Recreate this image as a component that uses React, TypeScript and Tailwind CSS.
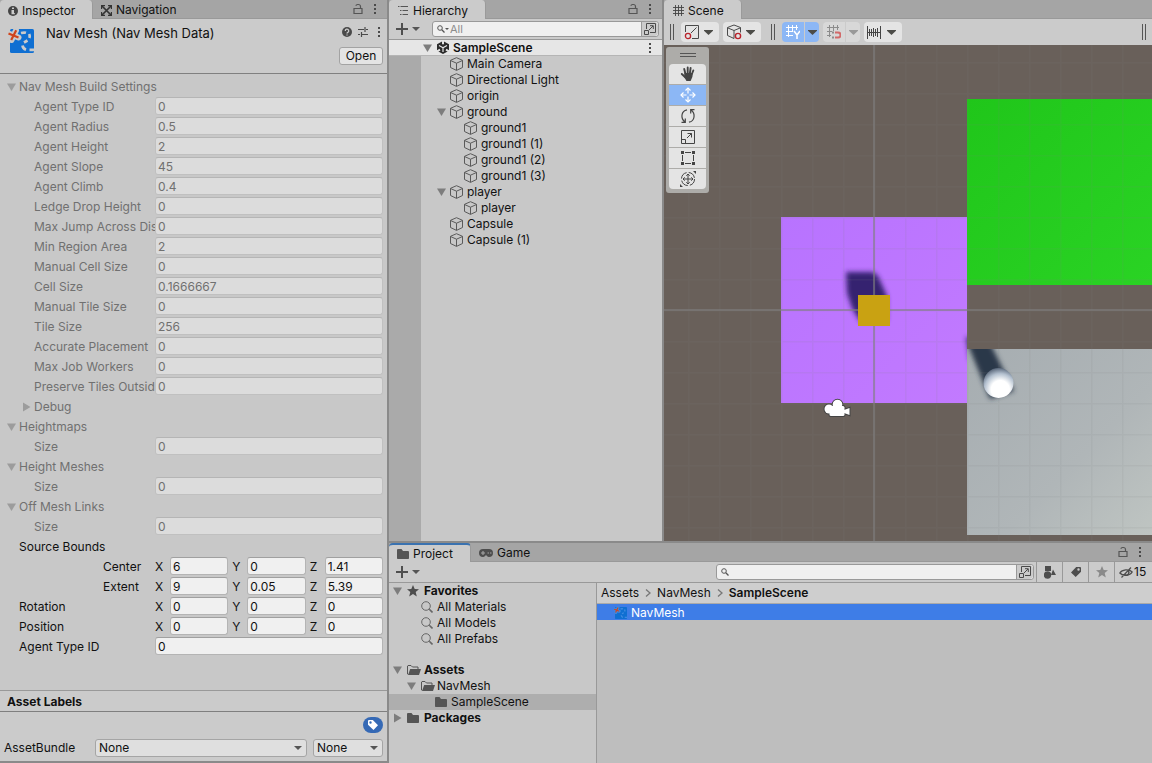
import React, { useState } from 'react';

interface Field {
  label: string;
  value: string;
}

interface TreeItem {
  name: string;
  depth: number;
  open?: boolean;
}

interface VectorField {
  label: string;
  values: [string, string, string];
  indent?: boolean;
}

const buildSettings: Field[] = [
  { label: 'Agent Type ID', value: '0' },
  { label: 'Agent Radius', value: '0.5' },
  { label: 'Agent Height', value: '2' },
  { label: 'Agent Slope', value: '45' },
  { label: 'Agent Climb', value: '0.4' },
  { label: 'Ledge Drop Height', value: '0' },
  { label: 'Max Jump Across Dis', value: '0' },
  { label: 'Min Region Area', value: '2' },
  { label: 'Manual Cell Size', value: '0' },
  { label: 'Cell Size', value: '0.1666667' },
  { label: 'Manual Tile Size', value: '0' },
  { label: 'Tile Size', value: '256' },
  { label: 'Accurate Placement', value: '0' },
  { label: 'Max Job Workers', value: '0' },
  { label: 'Preserve Tiles Outsid', value: '0' },
];

const vectors: VectorField[] = [
  { label: 'Center', values: ['6', '0', '1.41'], indent: true },
  { label: 'Extent', values: ['9', '0.05', '5.39'], indent: true },
  { label: 'Rotation', values: ['0', '0', '0'] },
  { label: 'Position', values: ['0', '0', '0'] },
];

const sceneTree: TreeItem[] = [
  { name: 'Main Camera', depth: 0 },
  { name: 'Directional Light', depth: 0 },
  { name: 'origin', depth: 0 },
  { name: 'ground', depth: 0, open: true },
  { name: 'ground1', depth: 1 },
  { name: 'ground1 (1)', depth: 1 },
  { name: 'ground1 (2)', depth: 1 },
  { name: 'ground1 (3)', depth: 1 },
  { name: 'player', depth: 0, open: true },
  { name: 'player', depth: 1 },
  { name: 'Capsule', depth: 0 },
  { name: 'Capsule (1)', depth: 0 },
];

/* ---------- Icons ---------- */

const Foldout = ({ open = true, className = 'text-[#7d7d7d]' }: { open?: boolean; className?: string }) => (
  <svg className={`h-[10px] w-[10px] shrink-0 ${className}`} viewBox="0 0 10 10" fill="currentColor">
    {open ? <path d="M0 1.500h9L4.500 9z" /> : <path d="M1 .5v9L8.500 5z" />}
  </svg>
);

const CaretIcon = ({ className = 'text-[#4c4c48]' }: { className?: string }) => (
  <svg className={`h-[5px] w-[9px] shrink-0 ${className}`} viewBox="0 0 9 5" fill="currentColor">
    <path d="M0 0h9v.8L4.500 5 0 .8z" />
  </svg>
);

const SmallCaretIcon = () => (
  <svg className="h-[4px] w-[8px] shrink-0" viewBox="0 0 8 4" fill="#555">
    <path d="M0 0h8L4 4z" />
  </svg>
);

const LockIcon = () => (
  <svg className="h-[12px] w-[10px]" viewBox="0 0 10 12" fill="none" stroke="#555">
    <path d="M1 5.500h8v5H1zM7.500 5.500V3.500a2 2 0 0 0-2-2h-1a2 2 0 0 0-1.700 1.200" strokeWidth="1.200" />
  </svg>
);

const DotsIcon = () => (
  <svg className="h-[10px] w-[2px]" viewBox="0 0 2 10" fill="#4a4a4a">
    <path d="M0 0h2v2H0zM0 4h2v2H0zM0 8h2v2H0z" />
  </svg>
);

const InfoIcon = () => (
  <svg className="h-[10px] w-[10px]" viewBox="0 0 10 10">
    <circle cx="5" cy="5" r="5" fill="#444" />
    <path d="M4 1.500h2v1.500H4zM3.500 4H6v3.500H3.500M3.500 7h3.300v1.200H3.500z" fill="#cbcbcb" />
  </svg>
);

const NavigationIcon = () => (
  <svg className="h-[11px] w-[11px]" viewBox="0 0 11 11" fill="none" stroke="#333">
    <path d="M1 1l9 9M10 1l-9 9" strokeWidth="1.700" />
    <path d="M.5 4V.5H4M7 .5h3.500V4M.5 7v3.500H4M7 10.500h3.500V7" strokeWidth="1.300" />
  </svg>
);

const HelpIcon = () => (
  <svg className="h-[10px] w-[10px]" viewBox="0 0 10 10">
    <circle cx="5" cy="5" r="5" fill="#4a4a4a" />
    <path d="M3.300 4a1.700 1.700 0 1 1 2.500 1.400c-.6.300-.8.500-.8 1.100M5 7.400v1.200" fill="none" stroke="#cbcbcb" strokeWidth="1.300" />
  </svg>
);

const PresetIcon = () => (
  <svg className="h-[10px] w-[10px]" viewBox="0 0 10 10" stroke="#4a4a4a" fill="none">
    <path d="M0 2.500h6M8 2.500h2M7 0v5M0 7.500h2M4 7.500h6M3.500 5v5" strokeWidth="1.200" />
  </svg>
);

const NavMeshIcon = ({ className, trail = '#cbcbcb' }: { className: string; trail?: string }) => (
  <svg className={className} viewBox="0 0 26 26" fill="none">
    <rect x="2" y="2" width="24" height="24" rx="1.500" fill="#0f6fd2" />
    <path d="M.5 6.500l10 4M8 3.500L3.500 13" stroke={trail} strokeWidth="6" strokeLinecap="round" />
    <path d="M13 6q3-.8 5-.2M21.200 7q1 2 .2 4M19.500 13.500l-3.500 2M14.500 18.500q.3 3 3.500 4.200M21.500 22.800H26" stroke={trail} strokeWidth="2.700" />
    <path d="M.5 6.500l10 4M8.200 3.200L3.200 13" stroke="#cf441c" strokeWidth="2.200" />
  </svg>
);

const HierarchyIcon = () => (
  <svg className="h-[9px] w-[12px]" viewBox="0 0 12 9" stroke="#555" fill="none">
    <path d="M1 .5h1.500M3.500 .5H11M3 4.500h1.500M5.500 4.500H11M3 8.500h1.500M5.500 8.500H11" />
  </svg>
);

const PlusIcon = () => (
  <svg className="h-[12px] w-[12px]" viewBox="0 0 12 12" fill="#4f4f4f">
    <path d="M5 0h2v5h5v2H7v5H5V7H0V5h5z" />
  </svg>
);

const SearchIcon = () => (
  <svg className="h-[8px] w-[8px] shrink-0" viewBox="0 0 8 8" fill="none" stroke="#555">
    <circle cx="3" cy="3" r="2.300" />
    <path d="M4.800 4.800L7.500 7.500" strokeWidth="1.300" />
  </svg>
);

const SavedSearchIcon = () => (
  <svg className="h-[12px] w-[12px] shrink-0" viewBox="0 0 12 12" fill="none" stroke="#666">
    <circle cx="5" cy="5" r="4.300" />
    <path d="M8.300 8.300L11.500 11.500" strokeWidth="1.600" />
  </svg>
);

const PopOutIcon = () => (
  <svg className="h-[12px] w-[12px]" viewBox="0 0 12 12" fill="none" stroke="#4a4a4a">
    <path d="M2.500 6V.5h9v9H6M.5 7.500h4v4h-4zM5 7l4-4M6 2.700h3.300V6" />
  </svg>
);

const UnityIcon = () => (
  <svg className="h-[13px] w-[12px]" viewBox="0 0 12 13">
    <path d="M6 0l6 3.300v6.400L6 13 0 9.700V3.300z" fill="#2b2b2b" />
    <path d="M6 6.700V11M6 6.700L2 4.400M6 6.700l4-2.300" stroke="#e6e6e6" strokeWidth="1.200" />
    <path d="M6 0v3.200M0 10.300l3-1.700M12 10.300L9 8.600" stroke="#e6e6e6" strokeWidth="2" />
  </svg>
);

const CubeIcon = () => (
  <svg className="h-[14px] w-[14px] shrink-0" viewBox="0 0 14 14" fill="none" stroke="#5a5a5a" strokeLinejoin="round">
    <path d="M6.500 .7l6 2.600v7.200L6.500 13.400l-6-2.900V3.300zM.5 3.500l6 2.700 6-2.700M6.500 6.200v7" />
  </svg>
);

const SceneIcon = () => (
  <svg className="h-[11px] w-[12px]" viewBox="0 0 12 11" stroke="#444">
    <path d="M3.500 0v11M6.500 0v11M9.500 0v11M1 2.500h11M1 5.500h11M1 8.500h11" strokeWidth=".9" />
  </svg>
);

const FolderIcon = () => (
  <svg className="h-[10px] w-[12px] shrink-0" viewBox="0 0 12 10" fill="#555">
    <path d="M0 1a1 1 0 0 1 1-1h3.500L6 2h5a1 1 0 0 1 1 1v6.200a.8.8 0 0 1-.8.800H.8A.8.8 0 0 1 0 9.200z" />
  </svg>
);

const FolderOpenIcon = () => (
  <svg className="h-[10px] w-[14px] shrink-0" viewBox="0 0 14 10" fill="none">
    <path d="M1 9.500L.5 9V1L1 .5h3l1.500 1.500H11v2" stroke="#555" />
    <path d="M3.200 4H14l-2 6H1z" fill="#555" />
  </svg>
);

const StarIcon = ({ fill = '#4d4d4d' }: { fill?: string }) => (
  <svg className="h-[12px] w-[12px]" viewBox="0 0 12 12" fill={fill}>
    <path d="M6 0l1.700 4 4.300.3-3.300 2.800 1.100 4.400L6 9.100l-3.800 2.400 1.100-4.400L0 4.300 4.300 4z" />
  </svg>
);

const GamepadIcon = () => (
  <svg className="h-[8px] w-[14px]" viewBox="0 0 14 8">
    <path d="M4 0h6a4 4 0 0 1 0 8q-1.500 0-2.200-1.500H6.200Q5.500 8 4 8a4 4 0 0 1 0-8z" fill="#4d4d4d" />
    <path d="M2 4h4M4 2v4M8.500 4h1.500M11 4h1.500" stroke="#a5a5a5" strokeWidth="1.100" />
  </svg>
);

const TagIcon = ({ fill }: { fill: string }) => (
  <svg className="h-[10px] w-[10px]" viewBox="0 0 10 10" fill={fill}>
    <path fillRule="evenodd" d="M0 1a1 1 0 0 1 1-1h3.800L10 5.300 5.500 10 0 4.800zm2.500.3a1.200 1.200 0 1 0 0 2.400 1.200 1.200 0 0 0 0-2.400z" />
  </svg>
);

const TypeFilterIcon = () => (
  <svg className="h-[13px] w-[12px]" viewBox="0 0 12 13" fill="#4d4d4d">
    <path d="M1 0h6v5H1zM9 3.500l3 5.500H7z" />
    <circle cx="3.500" cy="9" r="3.700" />
  </svg>
);

const HiddenIcon = () => (
  <svg className="h-[11px] w-[14px]" viewBox="0 0 14 11" fill="none" stroke="#4d4d4d">
    <path d="M.8 6C3 2.500 10 1.500 13.200 5 11 9 4 9.500.8 6zM12 .5L2.500 10.500" strokeWidth="1.200" />
    <path d="M9 3.500a2.500 2.500 0 0 1-3.500 4" strokeWidth="1.500" />
  </svg>
);

const ShadingIcon = () => (
  <svg className="h-[16px] w-[16px]" viewBox="0 0 16 16" fill="none">
    <path d="M1.500 8V1.500h13v13H8M12.500 3.500L7 9" stroke="#4a4a4a" />
    <circle cx="4" cy="12" r="2.600" stroke="#b8232c" strokeWidth="1.300" />
  </svg>
);

const GizmoCubeIcon = () => (
  <svg className="h-[16px] w-[16px]" viewBox="0 0 16 16" fill="none">
    <path d="M8 1l6.500 2.500v5M8 1L1.500 3.500v8L8 14.500V6.500M1.500 3.800L8 6.500l6.500-2.700" stroke="#4a4a4a" />
    <circle cx="12" cy="12" r="2.600" stroke="#b8232c" strokeWidth="1.400" />
  </svg>
);

const GridAxisIcon = () => (
  <svg className="h-[14px] w-[14px]" viewBox="0 0 14 14" fill="none" stroke="#fff">
    <path d="M2.500 0v12M6.500 0v6M10.500 0v5M0 2.500h12M0 6.500h7M0 10.500h7" />
    <path d="M8 6l3 4 3-4M11 10v4" strokeWidth="1.500" />
  </svg>
);

const GridSnapIcon = () => (
  <svg className="h-[14px] w-[14px]" viewBox="0 0 14 14" fill="none" stroke="#8c8c8c">
    <path d="M2.500 0v12M6.500 0v6M10.500 0v5M0 2.500h12M0 6.500h5M0 10.500h4" />
    <path d="M8 7.500h3a2.500 2.500 0 0 1 0 5H8" stroke="#d26a6a" strokeWidth="2" />
    <path d="M5 7.500h2M5 12.500h2" strokeWidth="2" />
  </svg>
);

const RulerIcon = () => (
  <svg className="h-[13px] w-[14px]" viewBox="0 0 14 13" fill="none" stroke="#444">
    <path d="M.5 0v13M13.500 0v13M2.500 3v7M4.500 3v7M6.500 2v9M8.500 3v7M10.500 2v9M0 6.500h14" />
  </svg>
);

const HandIcon = () => (
  <svg className="h-[16px] w-[16px]" viewBox="0 0 16 16" fill="none" stroke="#444" strokeWidth="1.900" strokeLinecap="round">
    <path d="M5.500 8L4.200 3M7.700 8V1.500M9.800 8l.8-6M11.500 9l1.800-4.500M5.500 11.500L1.800 8" />
    <path d="M5.300 8h6.200v2.500L10 14H7l-1.700-3z" fill="#444" />
  </svg>
);

const MoveIcon = () => (
  <svg className="h-[16px] w-[16px]" viewBox="0 0 16 16" fill="none" stroke="#fff" strokeWidth="1.200">
    <path d="M8 1v5.500M8 9.500V15M1 8h5.500M9.500 8H15" />
    <path d="M5.500 3.500L8 1l2.500 2.500M5.500 12.500L8 15l2.500-2.500M3.500 5.500L1 8l2.500 2.500M12.500 5.500L15 8l-2.500 2.500" />
  </svg>
);

const RotateIcon = () => (
  <svg className="h-[16px] w-[16px]" viewBox="0 0 16 16" fill="none" stroke="#444" strokeWidth="1.200">
    <path d="M7 1.800C1 3 .3 10.500 5 14M1.500 14.400H5.300V10.500M9 14.200c6-1.200 6.700-8.700 2-12.200M14.500 1.600H10.700v4" />
  </svg>
);

const ScaleIcon = () => (
  <svg className="h-[16px] w-[16px]" viewBox="0 0 16 16" fill="none" stroke="#444">
    <path d="M1.500 1.500h13v13h-13zM1.500 10.500h4v4M7 9l4.500-4.500M7.500 4.500h4v4" />
  </svg>
);

const RectIcon = () => (
  <svg className="h-[16px] w-[16px]" viewBox="0 0 16 16" fill="none" stroke="#444">
    <path d="M5 2.500h6M5 13.500h6M2.500 5v6M13.500 5v6" />
    <path d="M1 1h3v3H1zM12 1h3v3h-3zM1 12h3v3H1zM12 12h3v3h-3z" fill="#444" stroke="none" />
  </svg>
);

const TransformIcon = () => (
  <svg className="h-[16px] w-[16px]" viewBox="0 0 16 16" fill="none" stroke="#444">
    <circle cx="8" cy="8" r="6.500" strokeDasharray="8 2.200" />
    <path d="M8 3v10M3 8h10M6.300 4.700L8 3l1.700 1.700M6.300 11.300L8 13l1.700-1.700M4.700 6.300L3 8l1.700 1.700M11.300 6.300L13 8l-1.700 1.700" />
    <path d="M16 0v3l-3-3zM0 16v-3l3 3z" fill="#444" stroke="none" />
  </svg>
);

/* ---------- Shared pieces ---------- */

interface TabProps {
  icon: React.ReactNode;
  label: string;
  active?: boolean;
  focused?: boolean;
  className?: string;
}

const Tab: React.FC<TabProps> = ({ icon, label, active, focused, className = '' }) => (
  <button
    className={`flex h-full items-center gap-1 pr-2 pl-2 ${
      active ? 'rounded-t-sm border-r border-[#9a9a9a] bg-[#cbcbcb]' : 'border-b border-[#999]'
    } ${focused ? 'border-t-2 border-t-[#3a72b0]' : 'pt-[2px]'} ${className}`}
  >
    {icon}
    <span>{label}</span>
  </button>
);

const TabBar: React.FC<{ children: React.ReactNode; menu?: boolean }> = ({ children, menu = true }) => (
  <div className="flex h-[19px] shrink-0 bg-[#a5a5a5]">
    {children}
    <div className="flex flex-1 items-center justify-end gap-[11px] border-b border-[#999] pr-[11px]">
      {menu && (
        <>
          <button aria-label="Lock"><LockIcon /></button>
          <button aria-label="Menu"><DotsIcon /></button>
        </>
      )}
    </div>
  </div>
);

const DisabledRow: React.FC<Field & { id: string }> = ({ id, label, value }) => (
  <div className="flex h-5 items-center pr-1">
    <label htmlFor={id} className="w-[155px] shrink-0 pl-[34px] whitespace-nowrap">
      {label}
    </label>
    <input
      id={id}
      disabled
      defaultValue={value}
      className="h-[18px] min-w-0 flex-1 self-start rounded-[3px] border border-[#c0c0c0] border-t-[#b5b5b5] bg-[#dcdcdc] px-[2px]"
    />
  </div>
);

const GroupRow: React.FC<{ label: string }> = ({ label }) => (
  <button className="flex h-5 w-full items-center gap-[2px] pl-[7px]">
    <Foldout className="text-[#9c9c9c]" />
    {label}
  </button>
);

const enabledInput =
  'h-[18px] min-w-0 flex-1 self-start rounded-[3px] border border-[#b4b4b4] border-t-[#a0a0a0] bg-[#f0f0f0] px-[2px] text-[#111]';

const selectStyle =
  'block h-[18px] w-full appearance-none rounded-[3px] border border-[#a5a5a5] bg-[#dfdfdf] px-[3px] leading-4';

/* ---------- Inspector ---------- */

const Inspector = () => (
  <aside className="flex w-[389px] shrink-0 flex-col border-r-2 border-b-2 border-[#8a8a8a] bg-[#c8c8c8]">
    <TabBar>
      <Tab icon={<InfoIcon />} label="Inspector" active className="w-[93px]" />
      <Tab icon={<NavigationIcon />} label="Navigation" />
    </TabBar>

    <header className="flex h-[55px] shrink-0 items-start border-b border-[#808080] bg-[#cbcbcb] pr-1 pl-2">
      <NavMeshIcon className="mt-2 h-[26px] w-[26px]" />
      <h1 className="mt-1 ml-3 text-[13px] leading-5">Nav Mesh (Nav Mesh Data)</h1>
      <div className="ml-auto flex flex-col items-end gap-[10px] pt-2">
        <div className="flex items-center gap-[6px] pr-[3px]">
          <button aria-label="Help"><HelpIcon /></button>
          <button aria-label="Presets"><PresetIcon /></button>
          <button aria-label="Menu" className="pl-1"><DotsIcon /></button>
        </div>
        <button className="h-[18px] w-[44px] rounded-[3px] border border-[#a3a3a3] bg-[#e4e4e4]">
          Open
        </button>
      </div>
    </header>

    <div className="flex-1 pt-[3px]">
      <div className="text-[#707070]">
        <GroupRow label="Nav Mesh Build Settings" />
        {buildSettings.map((field, index) => (
          <DisabledRow key={field.label} id={`build-${index}`} {...field} />
        ))}
        <button className="flex h-5 items-center gap-[2px] pl-[22px]">
          <Foldout open={false} className="text-[#9c9c9c]" />
          Debug
        </button>
        {['Heightmaps', 'Height Meshes', 'Off Mesh Links'].map((group) => (
          <div key={group}>
            <GroupRow label={group} />
            <DisabledRow id={`${group}-size`} label="Size" value="0" />
          </div>
        ))}
      </div>

      <div className="flex h-5 items-center pl-[19px]">Source Bounds</div>
      {vectors.map(({ label, values, indent }) => (
        <div key={label} className="flex h-5 items-center pr-1" role="group" aria-label={label}>
          <span className={`w-[155px] shrink-0 ${indent ? 'pl-[103px]' : 'pl-[19px]'}`}>{label}</span>
          <div className="grid flex-1 grid-cols-3 gap-x-1">
            {['X', 'Y', 'Z'].map((axis, index) => (
              <label key={axis} className="flex h-5 items-center">
                <span className="w-[15px]">{axis}</span>
                <input defaultValue={values[index]} className={enabledInput} />
              </label>
            ))}
          </div>
        </div>
      ))}
      <div className="flex h-5 items-center pr-1">
        <label htmlFor="agent-type" className="w-[155px] shrink-0 pl-[19px]">Agent Type ID</label>
        <input id="agent-type" defaultValue="0" className={enabledInput} />
      </div>
    </div>

    <footer className="shrink-0 bg-[#cbcbcb]">
      <h2 className="flex h-[22px] items-center border-y border-t-[#999] border-b-[#7f7f7f] pt-px pl-[7px] font-bold">
        Asset Labels
      </h2>
      <div className="flex justify-end pt-[5px] pr-1">
        <button aria-label="Labels" className="flex h-4 w-5 items-center justify-center rounded-full bg-[#3569b5]">
          <TagIcon fill="#fff" />
        </button>
      </div>
      <div className="mt-[6px] flex items-center gap-[6px] pr-1 pb-1 pl-1">
        <label htmlFor="bundle" className="w-[85px]">AssetBundle</label>
        <div className="relative flex-1">
          <select id="bundle" className={selectStyle}>
            <option>None</option>
          </select>
          <span className="pointer-events-none absolute top-[7px] right-[5px]"><SmallCaretIcon /></span>
        </div>
        <div className="relative w-[70px]">
          <select aria-label="Variant" className={selectStyle}>
            <option>None</option>
          </select>
          <span className="pointer-events-none absolute top-[7px] right-[5px]"><SmallCaretIcon /></span>
        </div>
      </div>
    </footer>
  </aside>
);

/* ---------- Hierarchy ---------- */

const Hierarchy = () => (
  <section className="flex w-[275px] shrink-0 flex-col border-r-2 border-[#8a8a8a] bg-[#c8c8c8]">
    <TabBar>
      <Tab icon={<HierarchyIcon />} label="Hierarchy" active className="w-[97px]" />
    </TabBar>
    <div className="flex h-[21px] shrink-0 items-center border-b border-[#999] bg-[#cbcbcb] pr-[3px] pl-[7px]">
      <button aria-label="Create" className="flex items-center gap-1">
        <PlusIcon />
        <SmallCaretIcon />
      </button>
      <div className="ml-3 flex h-4 flex-1 items-center rounded-[3px] border border-[#999] bg-[#f0f0f0] pl-1">
        <SearchIcon />
        <svg className="h-[2px] w-[4px]" viewBox="0 0 4 2"><path d="M0 0h4L2 2z" fill="#555" /></svg>
        <input aria-label="Search hierarchy" placeholder="All" className="w-0 min-w-0 flex-1 px-px text-[11px] leading-[14px] placeholder:text-[#8c8c8c]" />
        <button aria-label="Open in search" className="flex h-full w-[17px] items-center justify-center rounded-r-sm border-l border-[#999] bg-[#cbcbcb]">
          <PopOutIcon />
        </button>
      </div>
    </div>
    <div className="flex h-4 shrink-0 items-center border-b border-[#b5b5b5] bg-[#e6e6e6] pr-[11px] pl-[34px]">
      <Foldout />
      <span className="mr-1 ml-1"><UnityIcon /></span>
      <span className="font-semibold">SampleScene</span>
      <button aria-label="Scene menu" className="ml-auto"><DotsIcon /></button>
    </div>
    <div className="flex flex-1">
      <div className="w-8 shrink-0 bg-[#aaa]" />
      <ul className="flex-1">
        {sceneTree.map(({ name, depth, open }, index) => (
          <li key={index}>
            <button className={`flex h-4 w-full items-center gap-[3px] ${depth === 0 ? 'pl-4' : 'pl-[30px]'}`}>
              {open ? <Foldout /> : <span className="w-[10px]" />}
              <CubeIcon />
              <span>{name}</span>
            </button>
          </li>
        ))}
      </ul>
    </div>
  </section>
);

/* ---------- Scene ---------- */

const DragHandle = () => (
  <span className="h-4 w-1 border-x border-[#555]" />
);

const ToolDropdown: React.FC<{ label: string; children: React.ReactNode }> = ({ label, children }) => (
  <button aria-label={label} className="flex h-5 w-[38px] items-center justify-between rounded-sm bg-[#e4e4e4] pr-[6px] pl-[3px]">
    {children}
    <CaretIcon />
  </button>
);

const SceneToolbar = () => (
  <div className="flex h-[26px] shrink-0 items-center bg-[#cbcbcb] pr-[6px] pl-[6px]">
    <DragHandle />
    <div className="ml-[7px] flex gap-1">
      <ToolDropdown label="Shading"><ShadingIcon /></ToolDropdown>
      <ToolDropdown label="Gizmos"><GizmoCubeIcon /></ToolDropdown>
    </div>
    <span className="ml-[10px] flex"><DragHandle /></span>
    <div className="ml-[7px] flex gap-1">
      <div className="flex gap-px">
        <button aria-label="Grid" className="flex h-5 w-[22px] items-center justify-center rounded-l-sm bg-[#8cb7f5]"><GridAxisIcon /></button>
        <button aria-label="Grid options" className="flex h-5 w-[14px] items-center justify-center rounded-r-sm bg-[#8cb7f5]"><CaretIcon /></button>
      </div>
      <div className="flex gap-px">
        <button aria-label="Snap" disabled className="flex h-5 w-[22px] items-center justify-center rounded-l-sm bg-[#d8d8d8]"><GridSnapIcon /></button>
        <button aria-label="Snap options" disabled className="flex h-5 w-[14px] items-center justify-center rounded-r-sm bg-[#d8d8d8]"><CaretIcon className="text-[#999]" /></button>
      </div>
      <ToolDropdown label="Increment"><RulerIcon /></ToolDropdown>
    </div>
    <span className="ml-auto flex"><DragHandle /></span>
  </div>
);

const tools = [
  { name: 'View', icon: <HandIcon /> },
  { name: 'Move', icon: <MoveIcon /> },
  { name: 'Rotate', icon: <RotateIcon /> },
  { name: 'Scale', icon: <ScaleIcon /> },
  { name: 'Rect', icon: <RectIcon /> },
  { name: 'Transform', icon: <TransformIcon /> },
];

const CameraShape = () => (
  <>
    <circle cx="173.500" cy="359.500" r="4.800" />
    <circle cx="165" cy="364" r="4.500" />
    <rect x="165.500" y="361" width="15" height="10" rx="1.500" />
    <path d="M180 365l5.500-2v7l-5.500-2z" />
  </>
);

const Viewport = () => (
  <svg className="absolute inset-0 h-full w-full">
    <defs>
      <pattern id="grid" x="210" y="265" width="31" height="31" patternUnits="userSpaceOnUse">
        <path d="M0 0h31M0 0v31" fill="none" stroke="#7a8080" strokeOpacity=".3" strokeWidth="3" />
      </pattern>
      <linearGradient id="purple" x1="0" y1="0" x2="1" y2="1">
        <stop offset="0" stopColor="#b873ff" />
        <stop offset="1" stopColor="#c27aff" />
      </linearGradient>
      <linearGradient id="green" x1="0" y1="0" x2="1" y2="1">
        <stop offset="0" stopColor="#20c61a" />
        <stop offset="1" stopColor="#2ad324" />
      </linearGradient>
      <linearGradient id="plane" x1="0" y1="0" x2="1" y2="1">
        <stop offset="0" stopColor="#a6adb1" />
        <stop offset=".6" stopColor="#b0b6b8" />
        <stop offset="1" stopColor="#bfc5c2" />
      </linearGradient>
      <radialGradient id="ball" cx=".56" cy=".72" r=".76">
        <stop offset=".4" stopColor="#fff" />
        <stop offset=".7" stopColor="#b3c0cf" />
        <stop offset="1" stopColor="#48566a" />
      </radialGradient>
      <filter id="soft" x="-40%" y="-40%" width="180%" height="180%">
        <feGaussianBlur stdDeviation="2.500" />
      </filter>
      <clipPath id="planeClip"><rect x="303" y="304" width="100%" height="186" /></clipPath>
      <clipPath id="purpleClip"><rect x="117" y="172" width="186" height="186" /></clipPath>
    </defs>
    <rect width="100%" height="100%" fill="#69605a" />
    <rect x="117" y="172" width="186" height="186" fill="url(#purple)" />
    <rect x="303" y="54" width="186" height="186" fill="url(#green)" />
    <rect x="303" y="304" width="186" height="186" fill="url(#plane)" />
    <g clipPath="url(#purpleClip)">
      <path d="M182 227h27l5 4 9 20v25h-27l-8-13-5-15z" fill="#35246f" filter="url(#soft)" />
      <path d="M302 292h12v24h-8z" fill="#35246f" filter="url(#soft)" />
    </g>
    <g clipPath="url(#planeClip)">
      <path d="M300 290h22l28 56-24 8z" fill="#2b3749" filter="url(#soft)" />
    </g>
    <rect width="100%" height="100%" fill="url(#grid)" opacity=".35" />
    <path d="M0 265h2000M210 0v2000" stroke="#808080" strokeWidth="1.500" strokeOpacity=".8" />
    <rect x="194" y="250" width="32" height="31" fill="#c9a212" />
    <circle cx="334.500" cy="338" r="15" fill="url(#ball)" />
    <g stroke="#444" strokeWidth="2"><CameraShape /></g>
    <g fill="#fff"><CameraShape /></g>
  </svg>
);

const Scene = () => {
  const [activeTool, setActiveTool] = useState('Move');

  return (
    <section className="flex min-w-0 flex-1 flex-col">
      <TabBar menu={false}>
        <Tab icon={<SceneIcon />} label="Scene" active className="w-[78px]" />
      </TabBar>
      <SceneToolbar />
      <div className="relative flex-1 overflow-hidden">
        <Viewport />
        <div className="absolute top-[2px] left-[2px] flex w-[43px] flex-col items-center gap-px rounded-[3px] bg-[#adaca9] pb-1">
          <span className="mt-[6px] mb-[6px] h-1 w-4 border-y border-[#555]" />
          {tools.map(({ name, icon }) => (
            <button
              key={name}
              aria-label={name}
              onClick={() => setActiveTool(name)}
              className={`flex h-5 w-[37px] items-center justify-center first-of-type:rounded-t-sm last:rounded-b-sm ${
                activeTool === name ? 'bg-[#8cb7f5]' : 'bg-[#e4e4e4]'
              }`}
            >
              {icon}
            </button>
          ))}
        </div>
      </div>
    </section>
  );
};

/* ---------- Project ---------- */

const Project = () => (
  <section className="flex h-[222px] shrink-0 flex-col border-t-2 border-[#8a8a8a] bg-[#c8c8c8]">
    <TabBar>
      <Tab icon={<FolderIcon />} label="Project" active focused className="w-[82px]" />
      <Tab icon={<GamepadIcon />} label="Game" />
    </TabBar>
    <div className="flex h-[21px] shrink-0 items-center border-b border-[#999] bg-[#cbcbcb] pl-[7px]">
      <button aria-label="Create asset" className="flex items-center gap-1">
        <PlusIcon />
        <SmallCaretIcon />
      </button>
      <div className="ml-auto flex h-4 w-[318px] items-center rounded-[3px] border border-[#999] bg-[#f0f0f0] pl-1">
        <SearchIcon />
        <input aria-label="Search project" className="w-0 min-w-0 flex-1 px-1 leading-[14px]" />
        <button aria-label="Open in search" className="flex h-full w-[17px] items-center justify-center rounded-r-sm border-l border-[#999] bg-[#cbcbcb]">
          <PopOutIcon />
        </button>
      </div>
      <div className="ml-[2px] flex h-full">
        <button aria-label="Search by type" className="flex w-[26px] items-center justify-center border-l border-[#999]"><TypeFilterIcon /></button>
        <button aria-label="Search by label" className="flex w-[26px] items-center justify-center border-l border-[#999]">
          <span className="rotate-90"><TagIcon fill="#4d4d4d" /></span>
        </button>
        <button aria-label="Save search" className="flex w-[26px] items-center justify-center border-l border-[#999]"><StarIcon fill="#8a8a8a" /></button>
        <button aria-label="Hidden packages" className="flex w-[38px] items-center gap-px border-l border-[#999] pl-1">
          <HiddenIcon />
          15
        </button>
      </div>
    </div>

    <div className="flex min-h-0 flex-1">
      <nav className="w-[208px] shrink-0 border-r border-[#999]">
        <button className="flex h-4 w-full items-center pl-1 font-bold">
          <Foldout />
          <span className="mr-[5px] ml-1"><StarIcon /></span>
          Favorites
        </button>
        {['All Materials', 'All Models', 'All Prefabs'].map((name) => (
          <button key={name} className="flex h-4 w-full items-center gap-1 pl-8">
            <SavedSearchIcon />
            {name}
          </button>
        ))}
        <button className="mt-[15px] flex h-4 w-full items-center pl-1 font-bold">
          <Foldout />
          <span className="mr-[3px] ml-1"><FolderOpenIcon /></span>
          Assets
        </button>
        <button className="flex h-4 w-full items-center pl-[18px]">
          <Foldout />
          <span className="mr-[2px] ml-1"><FolderOpenIcon /></span>
          NavMesh
        </button>
        <button className="flex h-4 w-full items-center gap-1 bg-[#aeaeae] pl-[46px]">
          <FolderIcon />
          SampleScene
        </button>
        <button className="flex h-4 w-full items-center pl-1 font-bold">
          <Foldout open={false} />
          <span className="mr-[5px] ml-1"><FolderIcon /></span>
          Packages
        </button>
      </nav>
      <div className="flex min-w-0 flex-1 flex-col bg-[#bebebe]">
        <div className="flex h-[21px] shrink-0 items-center gap-[6px] border-b border-[#aaa] bg-[#cecece] pl-1">
          <a href="#assets">Assets</a>
          <svg className="h-[8px] w-[6px]" viewBox="0 0 6 8" fill="none" stroke="#777" strokeWidth="1.300"><path d="M1 .5L5 4 1 7.500" /></svg>
          <a href="#navmesh">NavMesh</a>
          <svg className="h-[8px] w-[6px]" viewBox="0 0 6 8" fill="none" stroke="#777" strokeWidth="1.300"><path d="M1 .5L5 4 1 7.500" /></svg>
          <span className="font-semibold">SampleScene</span>
        </div>
        <button className="flex h-4 shrink-0 items-center gap-1 bg-[#3e7de7] pt-px pl-[17px] text-white">
          <NavMeshIcon className="h-[13px] w-[13px]" trail="#3e8ae0" />
          NavMesh
        </button>
      </div>
    </div>
  </section>
);

const App: React.FC = () => (
  <div className="flex h-screen overflow-hidden bg-[#8a8a8a] font-['Inter',sans-serif] text-[12px] leading-4 text-[#111]">
    <Inspector />
    <div className="flex min-w-0 flex-1 flex-col">
      <div className="flex min-h-0 flex-1">
        <Hierarchy />
        <Scene />
      </div>
      <Project />
    </div>
  </div>
);

export default App;
